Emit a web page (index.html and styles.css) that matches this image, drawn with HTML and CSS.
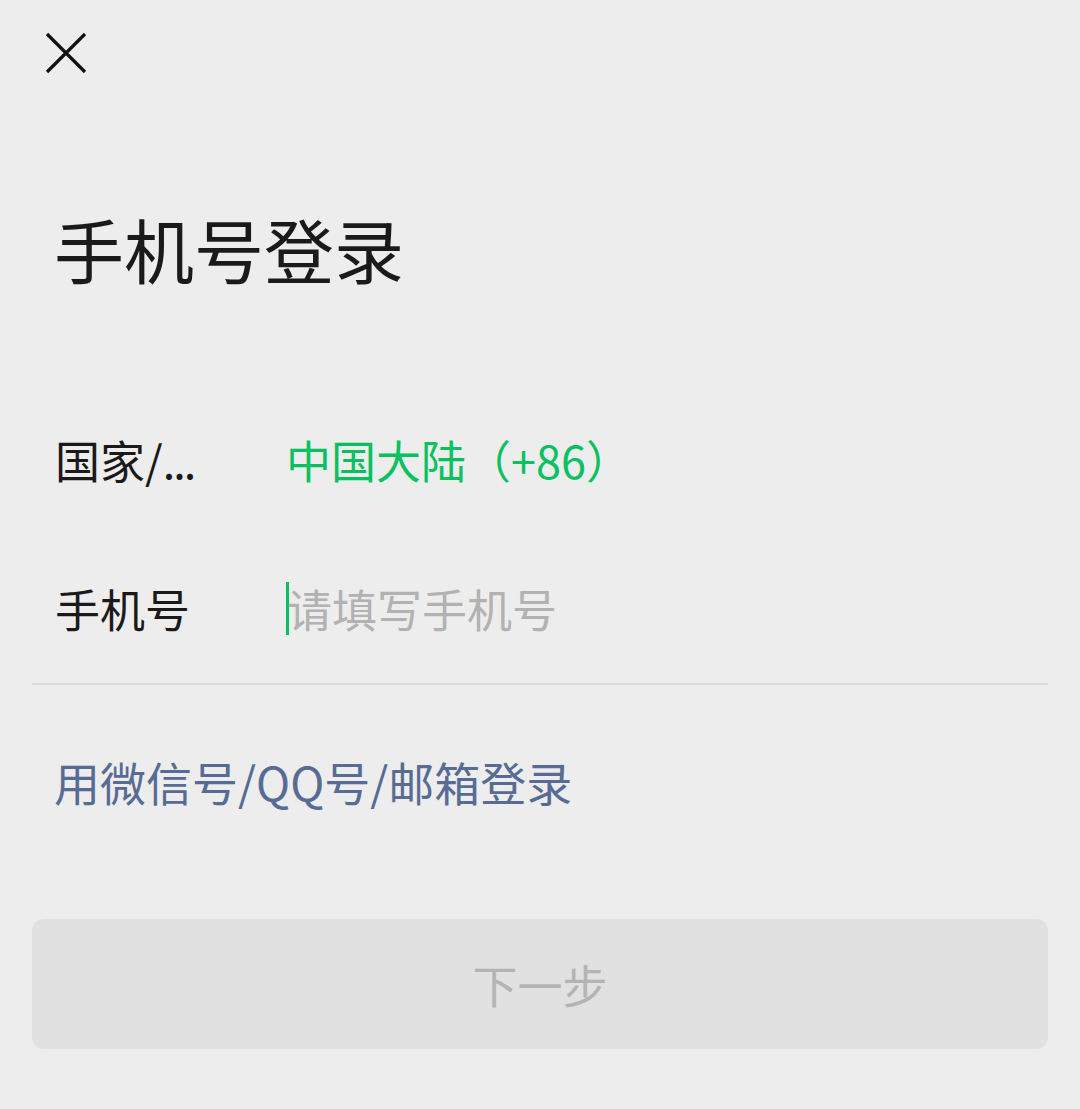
FILE: index.html
```html
<!DOCTYPE html>
<html lang="zh-CN">
<head>
<meta charset="utf-8">
<title>手机号登录</title>
<link rel="stylesheet" href="styles.css">
</head>
<body>
<div class="page">
  <div class="topbar">
    <svg class="close" width="42" height="42" viewBox="0 0 42 42" aria-label="关闭">
      <path d="M2 2 L40 40 M40 2 L2 40" stroke="#111" stroke-width="3.2" fill="none"/>
    </svg>
  </div>
  <h1 class="title">手机号登录</h1>
  <div class="form">
    <div class="row">
      <div class="label">国家/<span class="dots">...</span></div>
      <div class="value green">中国大陆（+86）</div>
    </div>
    <div class="row row-line">
      <div class="label">手机号</div>
      <div class="value input"><span class="caret"></span><span class="placeholder">请填写手机号</span></div>
    </div>
  </div>
  <div class="alt">用微信号/QQ号/邮箱登录</div>
  <div class="btn">下一步</div>
</div>
</body>
</html>
```

FILE: styles.css
```css
html, body {
  margin: 0;
  padding: 0;
  background: #ededed;
}
body {
  font-family: "Noto Sans CJK SC", "Noto Sans", sans-serif;
  color: #1a1a1a;
}
.page {
  padding: 0 32px;
  height: 1109px;
  box-sizing: border-box;
}
.topbar {
  padding-top: 32px;
  padding-left: 13px;
  height: 42px;
}
.close {
  display: block;
}
.title {
  margin: 125px 0 0 22px;
  font-size: 70px;
  font-weight: 400;
  line-height: 100px;
  height: 100px;
  color: #1a1a1a;
}
.form {
  margin-top: 85px;
}
.row {
  display: flex;
  align-items: center;
  height: 150px;
  padding-left: 23px;
  font-size: 45px;
}
.row-line {
  border-bottom: 2px solid #d8d8d8;
  height: 149px;
}
.label {
  width: 231px;
  flex: none;
  color: #1a1a1a;
}
.dots {
  letter-spacing: -2px;
}
.value {
  flex: 1;
}
.green {
  color: #07c160;
}
.input {
  display: flex;
  align-items: center;
}
.caret {
  display: inline-block;
  width: 3px;
  height: 53px;
  background: #07c160;
  margin-left: 0;
  margin-right: -2px;
}
.placeholder {
  color: #b2b2b2;
}
.alt {
  margin-top: 62px;
  padding-left: 22px;
  font-size: 46px;
  line-height: 68px;
  color: #576b95;
}
.btn {
  margin-top: 104px;
  height: 130px;
  border-radius: 12px;
  background: #e1e1e1;
  color: #b4b4b4;
  font-size: 45px;
  display: flex;
  align-items: center;
  justify-content: center;
}
```
